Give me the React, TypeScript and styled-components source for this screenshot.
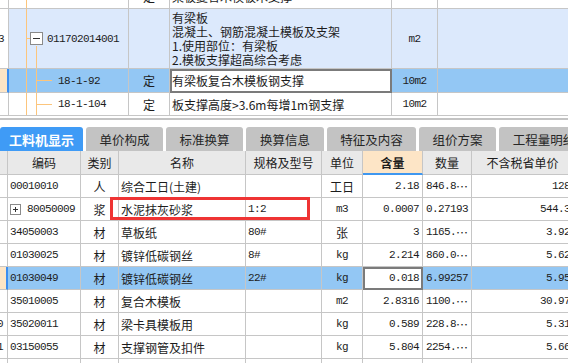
import styled, { createGlobalStyle, css } from 'styled-components';

const CJK = `"Noto Sans CJK SC", "Noto Sans", sans-serif`;
const MONO = `"Liberation Mono", "DejaVu Sans Mono", "Noto Sans CJK SC", monospace`;
const LINE = '#c6c6c6';
const TREE = '#fcc57c';
const ROW_BLUE = '#dce9fc';
const SEL_BLUE = '#93c7f4';
const SEL_HEAD = '#fde5c6';
const TOP_COLS = '9px 120px 41px 222px 46px 131px';
const BODY_COLS = '8px 73px 38px 127px 76px 41px 60px 49px 102px';

const GlobalStyle = createGlobalStyle`
  html, body { margin: 0; padding: 0; background: #fff; }
  body { overflow: hidden; font-family: ${CJK}; font-size: 12px; color: #1c1c1c; }
`;

const Page = styled.div`
  position: relative;
  width: 568px;
  height: 363px;
  overflow: hidden;
`;

const TopPane = styled.div`
  height: 116px;
  overflow: hidden;
`;

// scrolled so only the bottom of the first row shows
const TopScroll = styled.div`
  margin-top: -15px;
`;

const Row = styled.div<{ $cols: string; $h: number; $bg?: string }>`
  display: grid;
  grid-template-columns: ${(p) => p.$cols};
  height: ${(p) => p.$h}px;
  background: ${(p) => p.$bg ?? '#fff'};
`;

type Align = 'left' | 'center' | 'right';

const Cell = styled.div<{ $align?: Align; $mono?: boolean; $edit?: boolean; $pad?: number; $gap?: number }>`
  box-sizing: border-box;
  min-width: 0;
  display: flex;
  align-items: center;
  justify-content: ${(p) => (p.$align === 'center' ? 'center' : p.$align === 'right' ? 'flex-end' : 'flex-start')};
  gap: ${(p) => p.$gap ?? 0}px;
  padding: 0 ${(p) => p.$pad ?? 2}px;
  border-right: 1px solid ${LINE};
  border-bottom: 1px solid ${LINE};
  white-space: nowrap;
  overflow: hidden;
  font-family: ${(p) => (p.$mono ? MONO : CJK)};
  font-size: ${(p) => (p.$mono ? '11px' : '12px')};
  letter-spacing: ${(p) => (p.$mono ? '-0.6px' : '0')};
  ${(p) =>
    p.$edit &&
    css`
      background-color: #fff;
      outline: 2px solid #7b7b7b;
      outline-offset: -2px;
    `}
`;

const RowNum = styled.div<{ $sel?: boolean }>`
  box-sizing: border-box;
  display: flex;
  align-items: center;
  justify-content: flex-end;
  padding-right: 4px;
  overflow: hidden;
  background: ${(p) => (p.$sel ? SEL_HEAD : '#fff')};
  border-right: ${(p) => (p.$sel ? '2px solid #3c8ef0' : `1px solid ${LINE}`)};
  border-bottom: 1px solid ${LINE};
  font-family: ${MONO};
  font-size: 11px;
  letter-spacing: -0.6px;
`;

type Node = 'stem' | 'parent' | 'leaf';
const G = `linear-gradient(${TREE}, ${TREE})`;

const treeLines = {
  stem: css`
    background-image: ${G};
    background-position: 17px 0;
    background-size: 1px 100%;
  `,
  parent: css`
    background-image: ${G}, ${G}, ${G};
    background-position: 17px 0, 17px 50%, 27px 100%;
    background-size: 1px 100%, 4px 1px, 1px calc(50% - 7px);
  `,
  leaf: css`
    background-image: ${G}, ${G}, ${G};
    background-position: 17px 0, 27px 0, 27px 50%;
    background-size: 1px 100%, 1px 100%, 16px 1px;
  `,
};

const TreeCell = styled(Cell)<{ $node: Node }>`
  padding-left: ${(p) => (p.$node === 'parent' ? 21 : 49)}px;
  gap: 4px;
  background-repeat: no-repeat;
  ${(p) => treeLines[p.$node]}
`;

const Toggle = styled.span<{ $size: number }>`
  box-sizing: border-box;
  flex: none;
  width: ${(p) => p.$size}px;
  height: ${(p) => p.$size}px;
  border: 1px solid #8a8a8a;
  background: #fff;
  display: inline-flex;
  align-items: center;
  justify-content: center;
  svg {
    display: block;
  }
`;

const Lines = styled.div`
  display: flex;
  flex-direction: column;
  line-height: 14px;
  padding-top: 1px;
`;

const Divider = styled.div`
  height: 2px;
  margin-top: 2px;
  background: #c3c3c3;
`;

const TabBar = styled.div`
  display: flex;
  gap: 3px;
  margin-top: 7px;
  height: 24px;
`;

const Tab = styled.div<{ $w: number; $active?: boolean }>`
  flex: none;
  width: ${(p) => p.$w}px;
  border-radius: 3px 3px 0 0;
  display: flex;
  align-items: center;
  justify-content: center;
  white-space: nowrap;
  overflow: hidden;
  background: ${(p) => (p.$active ? '#3f9bf6' : '#c3c3c3')};
  color: ${(p) => (p.$active ? '#fff' : '#262626')};
  font-size: ${(p) => (p.$active ? '13px' : '12.5px')};
  font-weight: ${(p) => (p.$active ? 700 : 400)};
`;

const Table = styled.div`
  width: 574px;
`;

const HeadCell = styled(Cell)<{ $active?: boolean }>`
  justify-content: center;
  background: ${(p) => (p.$active ? SEL_HEAD : 'transparent')};
  font-weight: ${(p) => (p.$active ? 700 : 400)};
  ${(p) =>
    p.$active &&
    css`
      border-bottom: 2px solid #3f97ef;
    `}
`;

const More = styled.span`
  font-family: ${CJK};
  font-size: 12px;
  letter-spacing: 0;
`;

const Mark = styled.div`
  position: absolute;
  left: 110px;
  top: 197px;
  width: 200px;
  height: 23px;
  box-sizing: border-box;
  border: 3px solid #ef3434;
  pointer-events: none;
`;

const MinusIcon = () => (
  <svg width="11" height="11" viewBox="0 0 11 11">
    <path d="M2 5.5h7" stroke="#333" strokeWidth="1" />
  </svg>
);

const PlusIcon = () => (
  <svg width="9" height="9" viewBox="0 0 9 9">
    <path d="M2 4.5h5M4.5 2v5" stroke="#333" strokeWidth="1" />
  </svg>
);

const isAscii = (s: string) => /^[\x20-\x7e]*$/.test(s);

type Item = {
  num?: string;
  code: string;
  plus?: boolean;
  type: string;
  name: string;
  spec: string;
  unit: string;
  qty: string;
  amount: string;
  cut?: boolean;
  price: string;
  sel?: boolean;
};

const ITEMS: Item[] = [
  { code: '00010010', type: '人', name: '综合工日(土建)', spec: '', unit: '工日', qty: '2.18', amount: '846.8', cut: true, price: '128' },
  { code: '80050009', plus: true, type: '浆', name: '水泥抹灰砂浆', spec: '1:2', unit: 'm3', qty: '0.0007', amount: '0.27193', price: '544.3' },
  { code: '34050003', type: '材', name: '草板纸', spec: '80#', unit: '张', qty: '3', amount: '1165.', cut: true, price: '3.92' },
  { code: '01030025', type: '材', name: '镀锌低碳钢丝', spec: '8#', unit: 'kg', qty: '2.214', amount: '860.0', cut: true, price: '5.62' },
  { code: '01030049', type: '材', name: '镀锌低碳钢丝', spec: '22#', unit: 'kg', qty: '0.018', amount: '6.99257', price: '5.95', sel: true },
  { code: '35010005', type: '材', name: '复合木模板', spec: '', unit: 'm2', qty: '2.8316', amount: '1100.', cut: true, price: '30.97' },
  { num: '10', code: '35020011', type: '材', name: '梁卡具模板用', spec: '', unit: 'kg', qty: '0.589', amount: '228.8', cut: true, price: '5.31' },
  { num: '11', code: '03150055', type: '材', name: '支撑钢管及扣件', spec: '', unit: 'kg', qty: '5.804', amount: '2254.', cut: true, price: '5.66' },
];

const TABS = [
  { label: '工料机显示', w: 83, active: true },
  { label: '单价构成', w: 77 },
  { label: '标准换算', w: 77 },
  { label: '换算信息', w: 78 },
  { label: '特征及内容', w: 89 },
  { label: '组价方案', w: 77 },
  { label: '工程量明细', w: 90 },
];

const HEADS = ['', '编码', '类别', '名称', '规格及型号', '单位', '含量', '数量', '不含税省单价'];

const App = () => {
  return (
    <>
      <GlobalStyle />
      <Page>
        <TopPane>
          <TopScroll>
            <Row $cols={TOP_COLS} $h={24}>
              <RowNum />
              <TreeCell $node="stem" />
              <Cell $align="center">定</Cell>
              <Cell>梁板复合木模板木支撑</Cell>
              <Cell />
              <Cell />
            </Row>
            <Row $cols={TOP_COLS} $h={60} $bg={ROW_BLUE}>
              <RowNum>3</RowNum>
              <TreeCell $node="parent" $mono>
                <Toggle $size={13}>
                  <MinusIcon />
                </Toggle>
                011702014001
              </TreeCell>
              <Cell />
              <Cell>
                <Lines>
                  <span>有梁板</span>
                  <span>混凝土、钢筋混凝土模板及支架</span>
                  <span>1.使用部位：有梁板</span>
                  <span>2.模板支撑超高综合考虑</span>
                </Lines>
              </Cell>
              <Cell $align="center" $mono>
                m2
              </Cell>
              <Cell />
            </Row>
            <Row $cols={TOP_COLS} $h={24} $bg={SEL_BLUE}>
              <RowNum $sel />
              <TreeCell $node="leaf" $mono>
                18-1-92
              </TreeCell>
              <Cell $align="center">定</Cell>
              <Cell $edit>有梁板复合木模板钢支撑</Cell>
              <Cell $align="center" $mono>
                10m2
              </Cell>
              <Cell />
            </Row>
            <Row $cols={TOP_COLS} $h={23}>
              <RowNum />
              <TreeCell $node="leaf" $mono>
                18-1-104
              </TreeCell>
              <Cell $align="center">定</Cell>
              <Cell>板支撑高度&gt;3.6m每增1m钢支撑</Cell>
              <Cell $align="center" $mono>
                10m2
              </Cell>
              <Cell />
            </Row>
          </TopScroll>
        </TopPane>

        <Divider />
        <TabBar>
          {TABS.map((t) => (
            <Tab key={t.label} $w={t.w} $active={t.active}>
              {t.label}
            </Tab>
          ))}
        </TabBar>

        <Table>
          <Row $cols={BODY_COLS} $h={24} $bg="#e9e9e9">
            {HEADS.map((h, i) => (
              <HeadCell key={i} $active={h === '含量'}>
                {h}
              </HeadCell>
            ))}
          </Row>
          {ITEMS.map((it) => (
            <Row key={it.code} $cols={BODY_COLS} $h={23} $bg={it.sel ? SEL_BLUE : undefined}>
              <RowNum $sel={it.sel}>{it.num}</RowNum>
              <Cell $mono $gap={6}>
                {it.plus && (
                  <Toggle $size={11}>
                    <PlusIcon />
                  </Toggle>
                )}
                {it.code}
              </Cell>
              <Cell $align="center">{it.type}</Cell>
              <Cell>{it.name}</Cell>
              <Cell $mono>{it.spec}</Cell>
              <Cell $align="center" $mono={isAscii(it.unit)}>
                {it.unit}
              </Cell>
              <Cell $align="right" $mono $pad={3} $edit={it.sel}>
                {it.qty}
              </Cell>
              <Cell $mono $pad={3}>
                {it.amount}
                {it.cut && <More>⋯</More>}
              </Cell>
              <Cell $align="right" $mono $pad={3}>
                {it.price}
              </Cell>
            </Row>
          ))}
          <Row $cols={BODY_COLS} $h={23}>
            {HEADS.map((h, i) => (i === 0 ? <RowNum key={i} /> : <Cell key={i} />))}
          </Row>
        </Table>

        <Mark />
      </Page>
    </>
  );
};

export default App;
